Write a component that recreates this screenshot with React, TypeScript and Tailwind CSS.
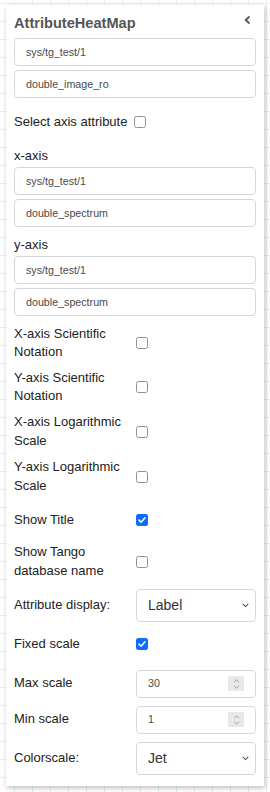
import React from 'react';

const font = { fontFamily: '"Liberation Sans", Arial, sans-serif' };

const Check = ({ on }: { on?: boolean }) =>
  on ? (
    <span className="flex h-[12px] w-[12px] items-center justify-center rounded-[2.5px] bg-[#0d6efd]">
      <svg viewBox="0 0 12 12" className="h-[10px] w-[10px]">
        <path d="M2.4 6.2 4.9 8.6 9.6 3.4" fill="none" stroke="white" strokeWidth="1.9" strokeLinecap="round" strokeLinejoin="round" />
      </svg>
    </span>
  ) : (
    <span className="block h-[12px] w-[12px] rounded-[2.5px] border border-[#8d9299] bg-white" />
  );

const Field = ({ value }: { value: string }) => (
  <div className="flex h-7 items-center rounded-[4px] border border-[#d3d7db] bg-white pl-[11px] text-[10.7px] text-[#4a4a4a]">
    {value}
  </div>
);

const Chevron = () => (
  <svg viewBox="0 0 8 6" className="h-[5px] w-[7px]">
    <path d="M1 1.3 4 4.4 7 1.3" fill="none" stroke="#555" strokeWidth="1.3" strokeLinecap="round" strokeLinejoin="round" />
  </svg>
);

const Select = ({ value }: { value: string }) => (
  <div className="flex h-[33px] items-center justify-between rounded-[4px] border border-[#d3d7db] bg-white pl-[11px] pr-[6px] text-[14px] text-[#333]">
    <span>{value}</span>
    <Chevron />
  </div>
);

const NumberField = ({ value }: { value: string }) => (
  <div className="flex h-7 items-center justify-between rounded-[4px] border border-[#d3d7db] bg-white pl-[11px] pr-[11px] text-[10.7px] text-[#4a4a4a]">
    <span>{value}</span>
    <span className="flex h-[15px] w-[16px] flex-col items-center justify-center gap-[2px] bg-[#e9e9ea]">
      <svg viewBox="0 0 8 5" className="h-[4px] w-[7px]">
        <path d="M1 4 4 1 7 4" fill="none" stroke="#8a8a8a" strokeWidth="1" />
      </svg>
      <svg viewBox="0 0 8 5" className="h-[4px] w-[7px]">
        <path d="M1 1 4 4 7 1" fill="none" stroke="#8a8a8a" strokeWidth="1" />
      </svg>
    </span>
  </div>
);

const Row = ({ label, children, className }: { label: string; children: React.ReactNode; className: string }) => (
  <div className={`grid grid-cols-[122px_1fr] items-center ${className}`}>
    <div className="pr-2 leading-[18.5px]">{label}</div>
    <div>{children}</div>
  </div>
);

export default function App() {
  return (
    <div
      className="min-h-screen w-full bg-white bg-[linear-gradient(to_right,#e2f0f4_1px,transparent_1px),linear-gradient(to_bottom,#e2f0f4_1px,transparent_1px)] bg-[size:18px_18px] bg-[position:14px_3px] pt-[5px] pl-[6px]"
      style={font}
    >
      <div className="w-[258px] bg-white px-2 pt-[9px] pb-[11px] text-[13px] text-[#222] shadow-[1px_2px_5px_rgba(0,0,0,0.25)]">
        {/* Header */}
        <div className="flex justify-between">
          <span className="text-[14.6px] font-bold leading-[18px] text-[#555]">AttributeHeatMap</span>
          <svg viewBox="0 0 6 8" className="mr-[6px] mt-[2px] h-[8px] w-[6px]">
            <path d="M5 1 1.6 4 5 7" fill="none" stroke="#555" strokeWidth="1.8" strokeLinecap="round" strokeLinejoin="round" />
          </svg>
        </div>

        <div className="mt-[6px] flex flex-col gap-1">
          <Field value="sys/tg_test/1" />
          <Field value="double_image_ro" />
        </div>

        <div className="mt-[15px] flex items-center gap-[7px] leading-[18px]">
          <span>Select axis attribute</span>
          <Check />
        </div>

        <div className="mt-[15px] leading-[20px]">x-axis</div>
        <div className="mt-px flex flex-col gap-1">
          <Field value="sys/tg_test/1" />
          <Field value="double_spectrum" />
        </div>

        <div className="mt-[7.5px] leading-[20px]">y-axis</div>
        <div className="mt-[1.5px] flex flex-col gap-1">
          <Field value="sys/tg_test/1" />
          <Field value="double_spectrum" />
        </div>

        <Row label="X-axis Scientific Notation" className="mt-[8.5px]"><Check /></Row>
        <Row label="Y-axis Scientific Notation" className="mt-[7px]"><Check /></Row>
        <Row label="X-axis Logarithmic Scale" className="mt-[7.5px]"><Check /></Row>
        <Row label="Y-axis Logarithmic Scale" className="mt-[8px]"><Check /></Row>
        <Row label="Show Title" className="mt-[15.5px]"><Check on /></Row>
        <Row label="Show Tango database name" className="mt-[14px]"><Check /></Row>
        <Row label="Attribute display:" className="mt-[8.5px]"><Select value="Label" /></Row>
        <Row label="Fixed scale" className="mt-[13.5px]"><Check on /></Row>
        <Row label="Max scale" className="mt-[16px]"><NumberField value="30" /></Row>
        <Row label="Min scale" className="mt-[8px]"><NumberField value="1" /></Row>
        <Row label="Colorscale:" className="mt-[8px]"><Select value="Jet" /></Row>
      </div>
    </div>
  );
}
